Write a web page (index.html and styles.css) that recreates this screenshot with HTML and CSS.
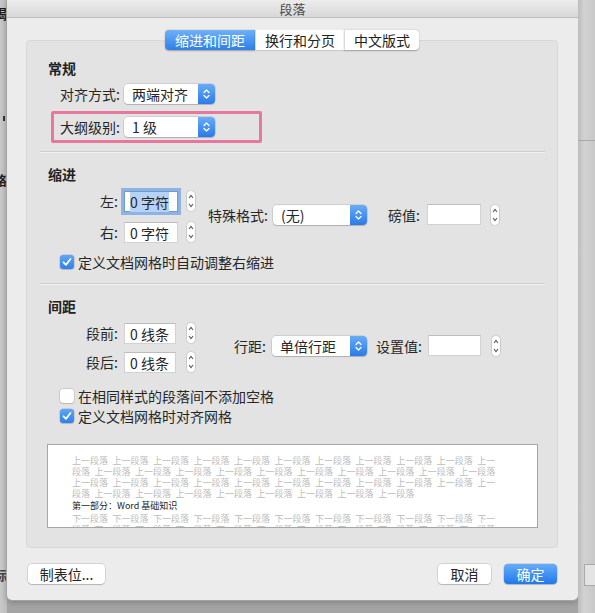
FILE: index.html
```html
<!DOCTYPE html>
<html lang="zh-CN">
<head>
  <meta charset="UTF-8">
  <meta name="viewport" content="width=device-width, initial-scale=1.0">
  <title>段落</title>
  <link rel="stylesheet" href="styles.css">
</head>
<body>
  <div class="screen">
    <!-- 背后的文档窗口（左侧） -->
    <div class="side side-left">
      <span class="ghost g1">揭</span>
      <span class="tick"></span>
      <span class="ghost g2">格</span>
      <span class="ghost g3">标</span>
    </div>

    <div class="dialog-wrap">
      <div class="dialog">
        <div class="titlebar">段落</div>

        <div class="dialog-body">
          <!-- 选项卡 -->
          <div class="tabs">
            <span class="tab active">缩进和间距</span>
            <span class="tab">换行和分页</span>
            <span class="tab">中文版式</span>
          </div>

          <div class="panel">
            <!-- 常规 -->
            <div class="group">
              <h3>常规</h3>
              <div class="row indent-row">
                <span class="label lead">对齐方式:</span>
                <div class="popup w-align">
                  <span class="popup-text">两端对齐</span>
                  <span class="popup-arrows"><svg width="7" height="12" viewBox="0 0 7 12"><path d="M1 4.5L3.5 2L6 4.5M1 7.5L3.5 10L6 7.5" fill="none" stroke="#fff" stroke-width="1.3" stroke-linecap="round" stroke-linejoin="round"/></svg></span>
                </div>
              </div>
              <div class="highlight">
                <div class="row">
                  <span class="label lead">大纲级别:</span>
                  <div class="popup w-align">
                    <span class="popup-text">1 级</span>
                    <span class="popup-arrows"><svg width="7" height="12" viewBox="0 0 7 12"><path d="M1 4.5L3.5 2L6 4.5M1 7.5L3.5 10L6 7.5" fill="none" stroke="#fff" stroke-width="1.3" stroke-linecap="round" stroke-linejoin="round"/></svg></span>
                  </div>
                </div>
              </div>
            </div>

            <div class="sep"></div>

            <!-- 缩进 -->
            <div class="group">
              <h3 class="gap-head">缩进</h3>
              <div class="fields indent-row">
                <div class="stack stack-indent">
                  <div class="row">
                    <span class="label lead right">左:</span>
                    <span class="field focus"><span class="sel">0 字符</span></span>
                    <span class="stepper"><svg width="10" height="22" viewBox="0 0 10 22"><rect x="0.5" y="0.5" width="9" height="21" rx="4" fill="#fff" stroke="#c9c9c9"/><path d="M3 8L5 5.5L7 8M3 14L5 16.5L7 14" fill="none" stroke="#555" stroke-width="1.1"/></svg></span>
                  </div>
                  <div class="row">
                    <span class="label lead right">右:</span>
                    <span class="field">0 字符</span>
                    <span class="stepper"><svg width="10" height="22" viewBox="0 0 10 22"><rect x="0.5" y="0.5" width="9" height="21" rx="4" fill="#fff" stroke="#c9c9c9"/><path d="M3 8L5 5.5L7 8M3 14L5 16.5L7 14" fill="none" stroke="#555" stroke-width="1.1"/></svg></span>
                  </div>
                </div>
                <div class="row mid special">
                  <span class="label">特殊格式:</span>
                  <div class="popup w-special">
                    <span class="popup-text">(无)</span>
                    <span class="popup-arrows"><svg width="7" height="12" viewBox="0 0 7 12"><path d="M1 4.5L3.5 2L6 4.5M1 7.5L3.5 10L6 7.5" fill="none" stroke="#fff" stroke-width="1.3" stroke-linecap="round" stroke-linejoin="round"/></svg></span>
                  </div>
                </div>
                <div class="row mid value">
                  <span class="label">磅值:</span>
                  <span class="field"></span>
                  <span class="stepper"><svg width="10" height="22" viewBox="0 0 10 22"><rect x="0.5" y="0.5" width="9" height="21" rx="4" fill="#fff" stroke="#c9c9c9"/><path d="M3 8L5 5.5L7 8M3 14L5 16.5L7 14" fill="none" stroke="#555" stroke-width="1.1"/></svg></span>
                </div>
              </div>
              <label class="check first-check indent-row">
                <span class="box checked"><svg width="14" height="14" viewBox="0 0 14 14"><path d="M3.5 7.3L6 9.8L10.5 4" fill="none" stroke="#fff" stroke-width="1.8" stroke-linecap="round" stroke-linejoin="round"/></svg></span>
                定义文档网格时自动调整右缩进
              </label>
            </div>

            <div class="sep sep-2"></div>

            <!-- 间距 -->
            <div class="group">
              <h3 class="gap-head">间距</h3>
              <div class="fields indent-row">
                <div class="stack stack-spacing">
                  <div class="row">
                    <span class="label lead right">段前:</span>
                    <span class="field narrow">0 线条</span>
                    <span class="stepper"><svg width="10" height="22" viewBox="0 0 10 22"><rect x="0.5" y="0.5" width="9" height="21" rx="4" fill="#fff" stroke="#c9c9c9"/><path d="M3 8L5 5.5L7 8M3 14L5 16.5L7 14" fill="none" stroke="#555" stroke-width="1.1"/></svg></span>
                  </div>
                  <div class="row">
                    <span class="label lead right">段后:</span>
                    <span class="field narrow">0 线条</span>
                    <span class="stepper"><svg width="10" height="22" viewBox="0 0 10 22"><rect x="0.5" y="0.5" width="9" height="21" rx="4" fill="#fff" stroke="#c9c9c9"/><path d="M3 8L5 5.5L7 8M3 14L5 16.5L7 14" fill="none" stroke="#555" stroke-width="1.1"/></svg></span>
                  </div>
                </div>
                <div class="row mid linespace">
                  <span class="label">行距:</span>
                  <div class="popup w-line">
                    <span class="popup-text">单倍行距</span>
                    <span class="popup-arrows"><svg width="7" height="12" viewBox="0 0 7 12"><path d="M1 4.5L3.5 2L6 4.5M1 7.5L3.5 10L6 7.5" fill="none" stroke="#fff" stroke-width="1.3" stroke-linecap="round" stroke-linejoin="round"/></svg></span>
                  </div>
                </div>
                <div class="row mid setvalue">
                  <span class="label">设置值:</span>
                  <span class="field"></span>
                  <span class="stepper"><svg width="10" height="22" viewBox="0 0 10 22"><rect x="0.5" y="0.5" width="9" height="21" rx="4" fill="#fff" stroke="#c9c9c9"/><path d="M3 8L5 5.5L7 8M3 14L5 16.5L7 14" fill="none" stroke="#555" stroke-width="1.1"/></svg></span>
                </div>
              </div>
              <label class="check spaced-check indent-row">
                <span class="box"></span>
                在相同样式的段落间不添加空格
              </label>
              <label class="check second-check indent-row">
                <span class="box checked"><svg width="14" height="14" viewBox="0 0 14 14"><path d="M3.5 7.3L6 9.8L10.5 4" fill="none" stroke="#fff" stroke-width="1.8" stroke-linecap="round" stroke-linejoin="round"/></svg></span>
                定义文档网格时对齐网格
              </label>
            </div>

            <!-- 预览 -->
            <div class="preview">
              <div class="pl">上一段落 上一段落 上一段落 上一段落 上一段落 上一段落 上一段落 上一段落 上一段落 上一段落 上一</div>
              <div class="pl">段落 上一段落 上一段落 上一段落 上一段落 上一段落 上一段落 上一段落 上一段落 上一段落 上一段落</div>
              <div class="pl">上一段落 上一段落 上一段落 上一段落 上一段落 上一段落 上一段落 上一段落 上一段落 上一段落 上一</div>
              <div class="pl">段落 上一段落 上一段落 上一段落 上一段落 上一段落 上一段落 上一段落 上一段落</div>
              <div class="pl current">第一部分：Word 基础知识</div>
              <div class="pl">下一段落 下一段落 下一段落 下一段落 下一段落 下一段落 下一段落 下一段落 下一段落 下一段落 下一</div>
              <div class="pl">段落 下一段落 下一段落 下一段落 下一段落 下一段落 下一段落 下一段落 下一段落 下一段落 下一段落</div>
            </div>
          </div>

          <!-- 底部按钮 -->
          <div class="footer">
            <button class="btn btn-tabs">制表位...</button>
            <span class="spacer"></span>
            <button class="btn">取消</button>
            <button class="btn primary">确定</button>
          </div>
        </div>
      </div>
    </div>

    <!-- 背后的文档窗口（右侧） -->
    <div class="side side-right">
      <span class="rline"></span>
      <span class="rbox"></span>
    </div>
  </div>
</body>
</html>
```

FILE: styles.css
```css
* {
  box-sizing: border-box;
}
body {
  margin: 0;
  background-color: #b5b5b5;
  font-family: "Noto Sans CJK SC", "Noto Sans", sans-serif;
  font-size: 14px;
  color: #262626;
}
.screen {
  display: flex;
  width: 595px;
  height: 613px;
  overflow: hidden;
}

/* 两侧的背景窗口 */
.side {
  flex: none;
  overflow: hidden;
  display: flex;
  flex-direction: column;
}
.side-left {
  width: 7px;
  align-items: flex-end;
  background: linear-gradient(90deg, #c9c9c9, #bdbdbd);
}
.ghost {
  font-size: 13px;
  font-weight: bold;
  line-height: 16px;
  color: #1e1e1e;
  white-space: nowrap;
}
.g1 {
  margin-top: 6px;
}
.tick {
  width: 2px;
  height: 5px;
  margin: 94px 2px 0 0;
  background-color: #333;
}
.g2 {
  margin-top: 51px;
}
.g3 {
  margin-top: 379px;
  color: #444;
}
.side-right {
  width: 17px;
  background: linear-gradient(90deg, #bcbcbc, #d2d2d2 35%, #c8c8c8);
}
.rline {
  height: 1px;
  margin-top: 140px;
  background-color: #a8a8a8;
}
.rbox {
  height: 22px;
  margin: 423px 0 0 6px;
  background-color: #e4e4e4;
  border: 1px solid #a9a9a9;
  border-right: none;
}

/* 对话框 */
.dialog-wrap {
  width: 571px;
  flex: none;
  background: linear-gradient(#b7b7b7, #a4a4a4);
}
.dialog {
  height: 600px;
  background-color: #ececec;
  border-radius: 0 0 5px 5px;
  box-shadow: 0 0 0 1px #a3a3a3, 0 2px 6px rgba(0, 0, 0, 0.25);
}
.titlebar {
  height: 18px;
  font-size: 13px;
  line-height: 17px;
  text-align: center;
  color: #4a4a4a;
  background: linear-gradient(#ececec, #d8d8d8);
  border-bottom: 1px solid #bdbdbd;
}
.dialog-body {
  padding: 12px 20px 16px 19px;
}

/* 选项卡 */
.tabs {
  position: relative;
  z-index: 1;
  display: flex;
  justify-content: center;
  height: 20px;
}
.tab {
  padding: 0 9px;
  line-height: 20px;
  background-color: #fff;
  color: #222;
  box-shadow: 0 0.5px 1.5px rgba(0, 0, 0, 0.3);
}
.tab + .tab {
  border-left: 1px solid #dadada;
}
.tab:first-child {
  padding: 0 10px;
  border-radius: 4px 0 0 4px;
}
.tab:last-child {
  border-radius: 0 4px 4px 0;
}
.tab.active {
  color: #fff;
  background: linear-gradient(#6eb0f8, #2f7fe9);
}

.panel {
  margin-top: -10px;
  padding: 18px 0 19px;
  background-color: #e3e3e3;
  border: 1px solid #d8d8d8;
  border-radius: 4px;
}
.group {
  padding-left: 21px;
}
.group h3 {
  margin: 0;
  font-size: 14px;
  font-weight: bold;
  line-height: 18px;
  color: #222;
}
.gap-head {
  padding-top: 12px;
}
.sep {
  height: 2px;
  margin: 8px 12px 0 13px;
  border-top: 1px solid #cdcdcd;
  border-bottom: 1px solid #f2f2f2;
}
.sep-2 {
  margin-top: 13px;
}

.row {
  display: flex;
  align-items: center;
  height: 20px;
}
.indent-row {
  margin-left: 12px;
}
.group > .row {
  margin-top: 7px;
}
.label {
  flex: none;
  white-space: nowrap;
  color: #262626;
}
.label.lead {
  width: 60px;
  margin-right: 4px;
}
.label.right {
  text-align: right;
  padding-right: 2px;
}

.highlight {
  width: 211px;
  margin: 7px 0 0 3px;
  padding: 3px 6px;
  border: 3px solid #e7789d;
  border-radius: 2px;
}

/* 弹出菜单 */
.popup {
  display: flex;
  height: 20px;
  background-color: #fff;
  border-radius: 4px;
  box-shadow: 0 0 0 0.5px rgba(0, 0, 0, 0.18), 0 1px 1px rgba(0, 0, 0, 0.15);
  overflow: hidden;
}
.popup-text {
  flex: 1;
  padding-left: 8px;
  line-height: 20px;
  white-space: nowrap;
}
.popup-arrows {
  width: 17px;
  display: flex;
  align-items: center;
  justify-content: center;
  background: linear-gradient(#68acf7, #2b7be8);
}
.w-align {
  width: 91px;
}
.w-special {
  width: 94px;
}
.w-line {
  width: 95px;
}

/* 文本框与步进器 */
.field {
  flex: none;
  width: 54px;
  height: 21px;
  padding-left: 5px;
  line-height: 20px;
  background-color: #fff;
  border: 1px solid #d2d2d2;
  border-top-color: #bdbdbd;
}
.field.narrow {
  width: 52px;
}
.field.focus {
  box-shadow: 0 0 0 3px #8db3e4;
  border-color: #6e9bd6;
}
.sel {
  background-color: #b6d2f4;
}
.stepper {
  flex: none;
  display: flex;
  margin-left: 8px;
}
.stack-spacing .stepper {
  margin-left: 10px;
}

.fields {
  display: flex;
  align-items: center;
  margin-top: 8px;
}
.stack-indent .row + .row {
  margin-top: 11px;
}
.stack-spacing .row + .row {
  margin-top: 9px;
}
.mid {
  margin-bottom: 4px;
}
.special {
  margin-left: 12px;
}
.special .label {
  margin-right: 5px;
}
.value {
  margin-left: 21px;
}
.value .label {
  margin-right: 7px;
}
.value .stepper {
  margin-left: 9px;
}
.linespace {
  margin-left: 38px;
}
.linespace .label {
  margin-right: 6px;
}
.setvalue {
  margin-left: 9px;
}
.setvalue .label {
  margin-right: 6px;
}
.setvalue .field {
  width: 53px;
}
.setvalue .stepper {
  margin-left: 10px;
}

/* 复选框 */
.check {
  display: flex;
  align-items: center;
  height: 16px;
  gap: 4px;
  color: #262626;
}
.first-check {
  margin-top: 12px;
}
.spaced-check {
  margin-top: 16px;
}
.second-check {
  margin-top: 4px;
}
.box {
  flex: none;
  width: 14px;
  height: 14px;
  display: flex;
  background-color: #fff;
  border-radius: 3px;
  box-shadow: 0 0 0 0.5px rgba(0, 0, 0, 0.2), 0 1px 1px rgba(0, 0, 0, 0.1);
}
.box.checked {
  background: linear-gradient(#5ea6f6, #2f80ea);
}

/* 预览 */
.preview {
  width: 491px;
  height: 84px;
  margin: 20px 0 0 20px;
  padding: 10px 0 0 24px;
  background-color: #fff;
  border: 1px solid #a6a6a6;
  overflow: hidden;
}
.pl {
  font-size: 9px;
  line-height: 11px;
  word-spacing: 2.5px;
  white-space: nowrap;
  color: #bcbcbc;
}
.pl.current {
  margin: 1px 0;
  line-height: 12px;
  word-spacing: 0;
  color: #1e1e1e;
}

/* 底部按钮 */
.footer {
  display: flex;
  gap: 13px;
  margin-top: 16px;
  padding: 0 1px 0 2px;
}
.spacer {
  flex: 1;
}
.btn {
  width: 53px;
  height: 20px;
  padding: 0;
  font-family: inherit;
  font-size: 14px;
  color: #262626;
  background-color: #fff;
  border: none;
  border-radius: 4px;
  box-shadow: 0 0 0 0.5px rgba(0, 0, 0, 0.2), 0 1px 1px rgba(0, 0, 0, 0.15);
}
.btn-tabs {
  width: 77px;
}
.btn.primary {
  color: #fff;
  background: linear-gradient(#67acf8, #1f78ea);
}
```
